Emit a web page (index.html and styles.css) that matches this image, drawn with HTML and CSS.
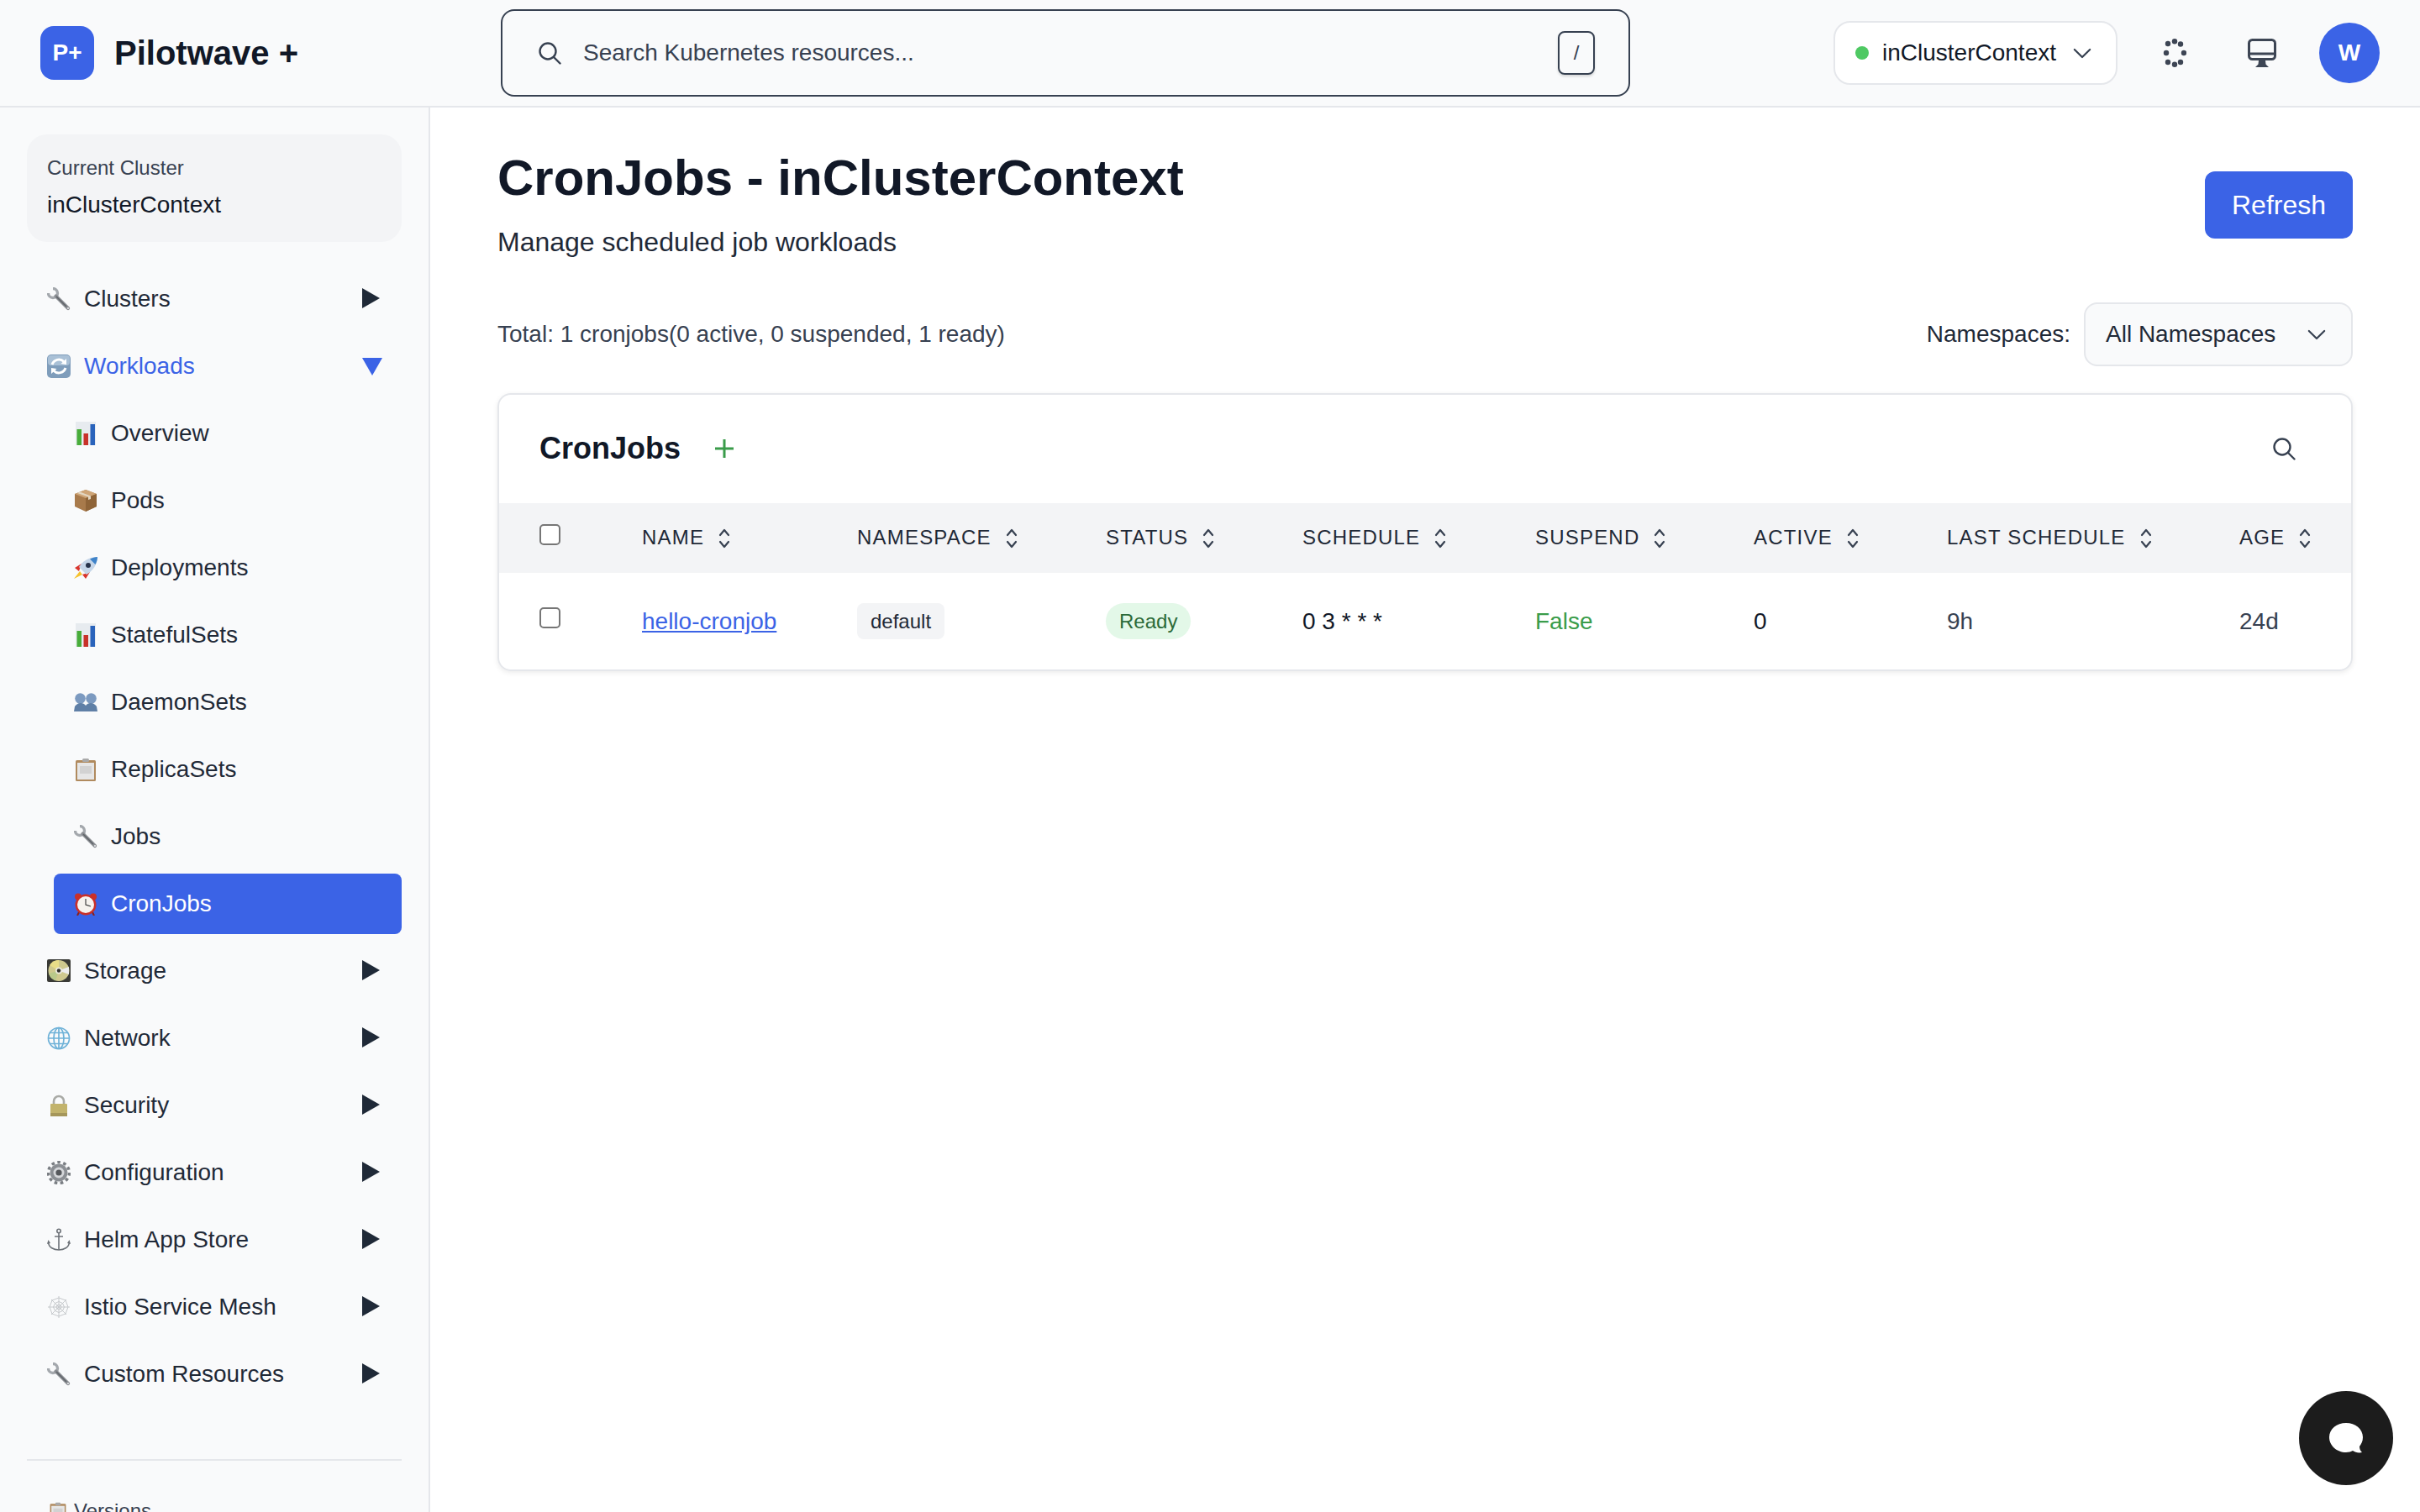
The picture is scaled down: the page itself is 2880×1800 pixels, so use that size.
FILE: index.html
```html
<!DOCTYPE html>
<html lang="en">
<head>
    <meta charset="UTF-8">
    <title>Pilotwave + CronJobs</title>
    <link rel="stylesheet" href="styles.css">
</head>
<body>

    <!-- small pictures used by the sidebar -->
    <svg class="sprites" width="0" height="0">
        <symbol id="i-wrench" viewBox="0 0 28 28">
            <path d="M1.5 7 A5.5 5.5 0 1 0 7 1.5" fill="none" stroke="#a4a8ad" stroke-width="3.4"/>
            <path d="M10.5 10.5 L25 25" stroke="#8b8e93" stroke-width="4.2" stroke-linecap="round"/>
            <path d="M11 11 L23 23" stroke="#5f6368" stroke-width="1.4"/>
            <circle cx="25" cy="25" r="1" fill="#eceef0"/>
        </symbol>
        <symbol id="i-sync" viewBox="0 0 28 28">
            <rect width="28" height="28" rx="5" fill="#7f9dbb"/>
            <rect x="1" y="1" width="26" height="12" rx="4" fill="#a9c0d6"/>
            <path d="M6 12 A8.5 8.5 0 0 1 20 8.5 M22 16 A8.5 8.5 0 0 1 8 19.5" fill="none" stroke="#fff" stroke-width="3"/>
            <path d="M23 5 L23 12 L16.5 11 Z M5 23 L5 16 L11.5 17 Z" fill="#fff"/>
        </symbol>
        <symbol id="i-chart" viewBox="0 0 28 28">
            <rect x="2" width="24" height="28" fill="#e7ebef"/>
            <rect x="3.5" y="9" width="5.5" height="19" fill="#48ad3a"/>
            <rect x="11.5" y="14" width="5.5" height="14" fill="#c8322a"/>
            <rect x="19.5" y="3" width="5.5" height="25" fill="#2a63bb"/>
        </symbol>
        <symbol id="i-box" viewBox="0 0 28 28">
            <path d="M14 1 L27 6 L27 21 L14 27 L1 21 L1 6 Z" fill="#a87a4b"/>
            <path d="M14 1 L27 6 L14 11 L1 6 Z" fill="#cfa577"/>
            <path d="M14 11 L27 6 L27 21 L14 27 Z" fill="#8f6438"/>
            <path d="M7 3.5 L20 8.5 L20 12 L17 13 L17 9.5 L4 5 Z" fill="#e2d6c2"/>
        </symbol>
        <symbol id="i-rocket" viewBox="0 0 28 28">
            <path d="M7 18 L0 27 L10 22 Z" fill="#f6c22c"/>
            <path d="M9 9 L1 14 L6 18 Z M19 19 L14 27 L10 22 Z" fill="#d9342b"/>
            <path d="M28 1 C18 1 10 6 6 13 L15 22 C22 18 28 10 28 1 Z" fill="#c5d5e8"/>
            <path d="M28 1 C25 1 22 2 19 3.5 L25.5 10 C27 7 28 4 28 1 Z" fill="#3f83c9"/>
            <circle cx="17" cy="11" r="3" fill="#27324a"/>
        </symbol>
        <symbol id="i-users" viewBox="0 0 28 28">
            <circle cx="7.5" cy="9.5" r="6.3" fill="#7c9ac0"/>
            <circle cx="20.5" cy="9.5" r="6.3" fill="#7c9ac0"/>
            <path d="M0 25 L1 19 Q4 15 8 15 Q12 15 14 18 Q16 15 20 15 Q24 15 27 19 L28 25 Z" fill="#5f7fa6"/>
        </symbol>
        <symbol id="i-clip" viewBox="0 0 28 28">
            <rect x="2" y="3" width="24" height="25" rx="1.5" fill="#b08a5e"/>
            <rect x="4" y="6" width="20" height="20" fill="#e6e6e6"/>
            <rect x="7" y="10" width="14" height="9" fill="#d2d2d2"/>
            <rect x="10" y="1" width="8" height="4" rx="1.5" fill="#a9a9a9"/>
        </symbol>
        <symbol id="i-clock" viewBox="0 0 28 28">
            <circle cx="5" cy="5.5" r="4" fill="#c9302a"/>
            <circle cx="23" cy="5.5" r="4" fill="#c9302a"/>
            <path d="M6 24 L4 28 M22 24 L24 28" stroke="#8a1f1a" stroke-width="2"/>
            <circle cx="14" cy="15" r="12.5" fill="#c9302a"/>
            <circle cx="14" cy="15" r="10" fill="#f6f3ee"/>
            <path d="M14 8 L14 15 L20 17" fill="none" stroke="#333" stroke-width="1.1"/>
        </symbol>
        <symbol id="i-disk" viewBox="0 0 28 28">
            <rect width="28" height="27" rx="2" fill="#3a3a36"/>
            <circle cx="14" cy="13.5" r="12.5" fill="#cfc98e"/>
            <path d="M14 13.5 L3 7 A12.5 12.5 0 0 1 14 1 Z" fill="#e9dd88"/>
            <path d="M14 13.5 L2 17 A12.5 12.5 0 0 0 10 25.4 Z" fill="#b9c98a"/>
            <path d="M14 13.5 L26 9 L26 18 Z" fill="#eeeeee"/>
            <circle cx="14" cy="13.5" r="4" fill="#eceadf"/>
            <circle cx="14" cy="13.5" r="2.2" fill="#2e2e2a"/>
        </symbol>
        <symbol id="i-globe" viewBox="0 0 28 28">
            <g fill="none" stroke="#6fb2d8" stroke-width="1.7">
                <circle cx="14" cy="14" r="12.5"/>
                <ellipse cx="14" cy="14" rx="6" ry="12.5"/>
                <path d="M14 1.5 L14 26.5 M1.5 14 L26.5 14 M3.5 7.5 L24.5 7.5 M3.5 20.5 L24.5 20.5"/>
            </g>
        </symbol>
        <symbol id="i-lock" viewBox="0 0 28 28">
            <path d="M8 13 L8 9 A6 6 0 0 1 20 9 L20 13" fill="none" stroke="#a9aaa6" stroke-width="2.6"/>
            <rect x="4" y="12" width="20" height="15" rx="1" fill="#c2b36c"/>
            <rect x="4" y="23" width="20" height="4" fill="#a5965a"/>
        </symbol>
        <symbol id="i-gear" viewBox="0 0 28 28">
            <circle cx="14" cy="14" r="10.5" fill="#8b8f94"/>
            <circle cx="14" cy="14" r="12.5" fill="none" stroke="#7a7e83" stroke-width="3.4" stroke-dasharray="3.6 3.5"/>
            <circle cx="14" cy="14" r="6.5" fill="#d5d7da"/>
            <circle cx="14" cy="14" r="3.6" fill="#55585c"/>
        </symbol>
        <symbol id="i-anchor" viewBox="0 0 28 28">
            <g fill="none" stroke="#6d7278" stroke-width="1.6">
                <circle cx="14" cy="3.5" r="2.2"/>
                <path d="M14 6 L14 26 M9 10 L19 10"/>
                <path d="M1.5 17 C2 23 8 26 14 26 C20 26 26 23 26.5 17"/>
            </g>
            <path d="M0 19 L1.5 14 L4 18 Z M28 19 L26.5 14 L24 18 Z" fill="#6d7278"/>
        </symbol>
        <symbol id="i-web" viewBox="0 0 28 28">
            <g fill="none" stroke="#c6c9cc" stroke-width="1">
                <path d="M14 1 L14 27 M1 14 L27 14 M5 5 L23 23 M23 5 L5 23"/>
                <path d="M14 3 L22 6 L25 14 L22 22 L14 25 L6 22 L3 14 L6 6 Z"/>
                <path d="M14 7.5 L18.5 9.5 L20.5 14 L18.5 18.5 L14 20.5 L9.5 18.5 L7.5 14 L9.5 9.5 Z"/>
                <path d="M14 11 L16 12 L17 14 L16 16 L14 17 L12 16 L11 14 L12 12 Z"/>
            </g>
        </symbol>
        <symbol id="i-sort" viewBox="0 0 16 28">
            <path d="M3 10 L8 4 L13 10 M3 18 L8 24 L13 18" fill="none" stroke="#374151" stroke-width="2.2" stroke-linecap="round" stroke-linejoin="round"/>
        </symbol>
        <symbol id="i-search" viewBox="0 0 28 28">
            <circle cx="12" cy="12" r="9.5" fill="none" stroke="currentColor" stroke-width="2.4"/>
            <path d="M19 19 L26.5 26.5" stroke="currentColor" stroke-width="2.4" stroke-linecap="round"/>
        </symbol>
        <symbol id="i-chevron" viewBox="0 0 24 14">
            <path d="M2 2 L12 12 L22 2" fill="none" stroke="currentColor" stroke-width="2.4" stroke-linecap="round" stroke-linejoin="round"/>
        </symbol>
    </svg>

    <header class="topbar">
        <div class="brand">
            <div class="logo">P+</div>
            <div class="brand-name">Pilotwave +</div>
        </div>
        <div class="search">
            <svg class="search-icon"><use href="#i-search"/></svg>
            <span class="search-text">Search Kubernetes resources...</span>
            <kbd class="search-key">/</kbd>
        </div>
        <div class="top-right">
            <div class="context">
                <span class="context-dot"></span>
                <span class="context-name">inClusterContext</span>
                <svg class="context-chevron"><use href="#i-chevron"/></svg>
            </div>
            <div class="top-icon">
                <svg width="28" height="34" viewBox="0 0 28 34" fill="#3d4554">
                    <circle cx="14" cy="3.2" r="3.2"/><circle cx="6" cy="6" r="3.2"/><circle cx="21" cy="6.5" r="3.2"/>
                    <circle cx="4" cy="17" r="3.2"/><circle cx="25" cy="17" r="3.2"/>
                    <circle cx="6" cy="28" r="3.2"/><circle cx="21" cy="28" r="3.2"/><circle cx="14" cy="30.8" r="3.2"/>
                </svg>
            </div>
            <div class="top-icon">
                <svg width="34" height="34" viewBox="0 0 34 34">
                    <rect x="1.5" y="1.5" width="31" height="23" rx="4" fill="none" stroke="#3d4554" stroke-width="3"/>
                    <rect x="1.5" y="16.5" width="31" height="3" fill="#3d4554"/>
                    <path d="M13 26 L21 26 L21.5 30.5 L25 34 L9 34 L12.5 30.5 Z" fill="#3d4554"/>
                </svg>
            </div>
            <div class="avatar">W</div>
        </div>
    </header>

    <div class="shell">
        <aside class="sidebar">
            <div class="cluster-card">
                <div class="cluster-label">Current Cluster</div>
                <div class="cluster-name">inClusterContext</div>
            </div>

            <nav class="nav">
                <div class="nav-item"><svg class="nav-icon"><use href="#i-wrench"/></svg><span>Clusters</span><span class="nav-arrow"></span></div>
                <div class="nav-item open"><svg class="nav-icon"><use href="#i-sync"/></svg><span>Workloads</span><span class="nav-arrow"></span></div>
                <div class="nav-item sub"><svg class="nav-icon"><use href="#i-chart"/></svg><span>Overview</span></div>
                <div class="nav-item sub"><svg class="nav-icon"><use href="#i-box"/></svg><span>Pods</span></div>
                <div class="nav-item sub"><svg class="nav-icon"><use href="#i-rocket"/></svg><span>Deployments</span></div>
                <div class="nav-item sub"><svg class="nav-icon"><use href="#i-chart"/></svg><span>StatefulSets</span></div>
                <div class="nav-item sub"><svg class="nav-icon"><use href="#i-users"/></svg><span>DaemonSets</span></div>
                <div class="nav-item sub"><svg class="nav-icon"><use href="#i-clip"/></svg><span>ReplicaSets</span></div>
                <div class="nav-item sub"><svg class="nav-icon"><use href="#i-wrench"/></svg><span>Jobs</span></div>
                <div class="nav-item sub active"><svg class="nav-icon"><use href="#i-clock"/></svg><span>CronJobs</span></div>
                <div class="nav-item"><svg class="nav-icon"><use href="#i-disk"/></svg><span>Storage</span><span class="nav-arrow"></span></div>
                <div class="nav-item"><svg class="nav-icon"><use href="#i-globe"/></svg><span>Network</span><span class="nav-arrow"></span></div>
                <div class="nav-item"><svg class="nav-icon"><use href="#i-lock"/></svg><span>Security</span><span class="nav-arrow"></span></div>
                <div class="nav-item"><svg class="nav-icon"><use href="#i-gear"/></svg><span>Configuration</span><span class="nav-arrow"></span></div>
                <div class="nav-item"><svg class="nav-icon"><use href="#i-anchor"/></svg><span>Helm App Store</span><span class="nav-arrow"></span></div>
                <div class="nav-item"><svg class="nav-icon"><use href="#i-web"/></svg><span>Istio Service Mesh</span><span class="nav-arrow"></span></div>
                <div class="nav-item"><svg class="nav-icon"><use href="#i-wrench"/></svg><span>Custom Resources</span><span class="nav-arrow"></span></div>
            </nav>

            <div class="versions">
                <svg class="versions-icon"><use href="#i-clip"/></svg>
                <span>Versions</span>
            </div>
        </aside>

        <main class="content">
            <div class="page-head">
                <div>
                    <h1>CronJobs - inClusterContext</h1>
                    <p class="page-sub">Manage scheduled job workloads</p>
                </div>
                <button class="refresh">Refresh</button>
            </div>

            <div class="toolbar">
                <div class="total">Total: 1 cronjobs(0 active, 0 suspended, 1 ready)</div>
                <div class="ns-filter">
                    <span>Namespaces:</span>
                    <div class="ns-select">
                        <span>All Namespaces</span>
                        <svg class="context-chevron"><use href="#i-chevron"/></svg>
                    </div>
                </div>
            </div>

            <section class="card">
                <div class="card-head">
                    <h2>CronJobs</h2>
                    <svg class="card-add" viewBox="0 0 24 24"><path d="M12 1 L12 23 M1 12 L23 12" stroke="#3a9c4a" stroke-width="3"/></svg>
                    <svg class="card-search"><use href="#i-search"/></svg>
                </div>
                <table class="grid">
                    <colgroup>
                        <col class="c-check"><col class="c-name"><col class="c-ns"><col class="c-status">
                        <col class="c-schedule"><col class="c-suspend"><col class="c-active"><col class="c-last"><col>
                    </colgroup>
                    <thead>
                        <tr>
                            <th><span class="check head-check"></span></th>
                            <th>Name<svg class="sort"><use href="#i-sort"/></svg></th>
                            <th>Namespace<svg class="sort"><use href="#i-sort"/></svg></th>
                            <th>Status<svg class="sort"><use href="#i-sort"/></svg></th>
                            <th>Schedule<svg class="sort"><use href="#i-sort"/></svg></th>
                            <th>Suspend<svg class="sort"><use href="#i-sort"/></svg></th>
                            <th>Active<svg class="sort"><use href="#i-sort"/></svg></th>
                            <th>Last Schedule<svg class="sort"><use href="#i-sort"/></svg></th>
                            <th>Age<svg class="sort"><use href="#i-sort"/></svg></th>
                        </tr>
                    </thead>
                    <tbody>
                        <tr>
                            <td><span class="check"></span></td>
                            <td><a class="job-link" href="#">hello-cronjob</a></td>
                            <td><span class="tag">default</span></td>
                            <td><span class="tag ready">Ready</span></td>
                            <td class="dark">0 3 * * *</td>
                            <td class="green">False</td>
                            <td class="dark">0</td>
                            <td>9h</td>
                            <td>24d</td>
                        </tr>
                    </tbody>
                </table>
            </section>
        </main>
    </div>

    <button class="chat">
        <svg width="42" height="38" viewBox="0 0 42 38"><path d="M21 1 C32 1 41 8 41 18 C41 23 39 26 37 29 C37 32 38 34 40 36 C36 37 32 36 29 34 C27 35 24 36 21 36 C10 36 1 28 1 18 C1 8 10 1 21 1 Z" fill="#fff"/></svg>
    </button>

</body>
</html>
```

FILE: styles.css
```css
* {
    box-sizing: border-box;
}
html, body {
    height: 100%;
}
body {
    margin: 0;
    display: flex;
    flex-direction: column;
    overflow: hidden;
    background-color: #fff;
    color: #111827;
    font-family: "Liberation Sans", Arial, sans-serif;
    font-size: 28px;
}
.sprites {
    position: absolute;
}

/* top bar */
.topbar {
    display: flex;
    align-items: center;
    flex: none;
    height: 128px;
    padding-right: 48px;
    background-color: #f9fafb;
    border-bottom: 2px solid #e5e7eb;
}
.brand {
    display: flex;
    align-items: center;
    gap: 24px;
    width: 596px;
    padding-left: 48px;
}
.logo {
    display: flex;
    align-items: center;
    justify-content: center;
    width: 64px;
    height: 64px;
    border-radius: 16px;
    background-color: #3b63e6;
    color: #fff;
    font-size: 28px;
    font-weight: bold;
}
.brand-name {
    font-size: 40px;
    font-weight: bold;
}
.search {
    display: flex;
    align-items: center;
    width: 1344px;
    height: 104px;
    padding: 0 40px 0 42px;
    border: 2px solid #374151;
    border-radius: 16px;
}
.search-icon {
    width: 28px;
    height: 28px;
    margin-right: 26px;
    color: #374151;
}
.search-text {
    flex: 1;
    color: #374151;
}
.search-key {
    display: flex;
    align-items: center;
    justify-content: center;
    width: 44px;
    height: 52px;
    border: 2px solid #374151;
    border-radius: 8px;
    box-shadow: 0 2px 3px rgba(0, 0, 0, 0.15);
    color: #374151;
    font-family: inherit;
    font-size: 24px;
}
.top-right {
    display: flex;
    align-items: center;
    gap: 32px;
    margin-left: auto;
}
.context {
    display: flex;
    align-items: center;
    width: 338px;
    height: 76px;
    padding-left: 24px;
    border: 2px solid #e5e7eb;
    border-radius: 20px;
    background-color: #fff;
}
.context-dot {
    width: 16px;
    height: 16px;
    margin-right: 16px;
    border-radius: 50%;
    background-color: #4fc963;
}
.context-chevron {
    width: 22px;
    height: 13px;
    margin-left: 20px;
    color: #374151;
}
.top-icon {
    display: flex;
    align-items: center;
    justify-content: center;
    width: 72px;
    height: 72px;
}
.avatar {
    display: flex;
    align-items: center;
    justify-content: center;
    width: 72px;
    height: 72px;
    border-radius: 50%;
    background-color: #3b63e6;
    color: #fff;
    font-weight: bold;
}

/* sidebar */
.shell {
    display: flex;
    flex: 1;
    min-height: 0;
}
.sidebar {
    flex: none;
    width: 512px;
    padding: 32px 32px 0;
    overflow: hidden;
    background-color: #f9fafb;
    border-right: 2px solid #e5e7eb;
}
.cluster-card {
    height: 128px;
    padding: 24px;
    border-radius: 24px;
    background-color: #f3f4f6;
}
.cluster-label {
    color: #374151;
    font-size: 24px;
    line-height: 32px;
}
.cluster-name {
    margin-top: 10px;
    line-height: 36px;
}
.nav {
    margin-top: 32px;
}
.nav-item {
    display: flex;
    align-items: center;
    height: 72px;
    margin-bottom: 8px;
    padding-left: 24px;
    border-radius: 8px;
    color: #1f2937;
}
.nav-item.sub {
    margin-left: 32px;
}
.nav-item.open {
    color: #3b63e6;
}
.nav-item.active {
    background-color: #3b63e6;
    color: #fff;
}
.nav-icon {
    flex: none;
    width: 28px;
    height: 28px;
    margin-right: 16px;
}
.nav-arrow {
    width: 0;
    height: 0;
    margin-left: auto;
    margin-right: 26px;
    margin-bottom: 3px;
    border-left: 21px solid #1f2937;
    border-top: 12px solid transparent;
    border-bottom: 12px solid transparent;
}
.open .nav-arrow {
    margin-right: 23px;
    margin-bottom: 0;
    border-left: 12px solid transparent;
    border-right: 12px solid transparent;
    border-top: 21px solid #3b63e6;
    border-bottom: 0;
}
.versions {
    display: flex;
    align-items: center;
    gap: 8px;
    margin-top: 65px;
    padding: 46px 26px 0;
    border-top: 2px solid #e5e7eb;
    color: #374151;
    font-size: 24px;
}
.versions-icon {
    width: 22px;
    height: 22px;
}

/* main area */
.content {
    flex: 1;
    min-width: 0;
    padding: 48px 80px 0;
}
.page-head {
    display: flex;
    align-items: center;
    justify-content: space-between;
}
h1 {
    margin: 0;
    font-size: 60px;
    line-height: 72px;
}
.page-sub {
    margin: 16px 0 0;
    color: #1f2937;
    font-size: 32px;
    line-height: 48px;
}
.refresh {
    width: 176px;
    height: 80px;
    border: none;
    border-radius: 12px;
    background-color: #3b63e6;
    color: #fff;
    font-family: inherit;
    font-size: 32px;
}
.toolbar {
    display: flex;
    align-items: center;
    justify-content: space-between;
    margin-top: 48px;
    color: #374151;
}
.ns-filter {
    display: flex;
    align-items: center;
    gap: 16px;
    color: #1f2937;
}
.ns-select {
    display: flex;
    align-items: center;
    justify-content: space-between;
    width: 320px;
    height: 76px;
    padding: 0 30px 0 24px;
    border: 2px solid #e5e7eb;
    border-radius: 16px;
    background-color: #f9fafb;
}
.card {
    margin-top: 32px;
    overflow: hidden;
    border: 2px solid #e5e7eb;
    border-radius: 16px;
    box-shadow: 0 2px 6px rgba(0, 0, 0, 0.08);
}
.card-head {
    display: flex;
    align-items: center;
    height: 129px;
    padding: 0 66px 2px 48px;
}
h2 {
    margin: 0;
    font-size: 36px;
}
.card-add {
    width: 24px;
    height: 24px;
    margin-left: 40px;
}
.card-search {
    width: 28px;
    height: 28px;
    margin-left: auto;
    color: #374151;
}
.grid {
    width: 100%;
    table-layout: fixed;
    border-collapse: collapse;
}
.c-check { width: 170px; }
.c-name { width: 256px; }
.c-ns { width: 296px; }
.c-status { width: 234px; }
.c-schedule { width: 277px; }
.c-suspend { width: 260px; }
.c-active { width: 230px; }
.c-last { width: 348px; }
.grid th {
    height: 83px;
    padding: 0;
    background-color: #f3f4f6;
    color: #1f2937;
    font-size: 24px;
    font-weight: normal;
    letter-spacing: 1.2px;
    text-align: left;
    text-transform: uppercase;
    white-space: nowrap;
}
.grid td {
    height: 115px;
    padding: 0;
    color: #374151;
}
.grid th:first-child,
.grid td:first-child {
    padding-left: 48px;
}
.sort {
    width: 16px;
    height: 28px;
    margin-left: 16px;
    vertical-align: -7px;
}
.check {
    display: block;
    width: 25px;
    height: 25px;
    margin-bottom: 8px;
    border: 2px solid #767676;
    border-radius: 5px;
    background-color: #fff;
}
.grid .dark {
    color: #111827;
}
.grid .green {
    color: #3a9c4a;
}
.job-link {
    color: #3b63e6;
}
.tag {
    display: inline-block;
    padding: 0 16px;
    border-radius: 8px;
    background-color: #f3f4f6;
    color: #1f2937;
    font-size: 24px;
    line-height: 43px;
}
.tag.ready {
    border-radius: 22px;
    background-color: #e3f8e8;
    color: #2b6a39;
}

/* chat bubble sits over the page */
.chat {
    position: fixed;
    right: 32px;
    bottom: 32px;
    display: flex;
    align-items: center;
    justify-content: center;
    width: 112px;
    height: 112px;
    border: none;
    border-radius: 50%;
    background-color: #1c1c1c;
}
```
